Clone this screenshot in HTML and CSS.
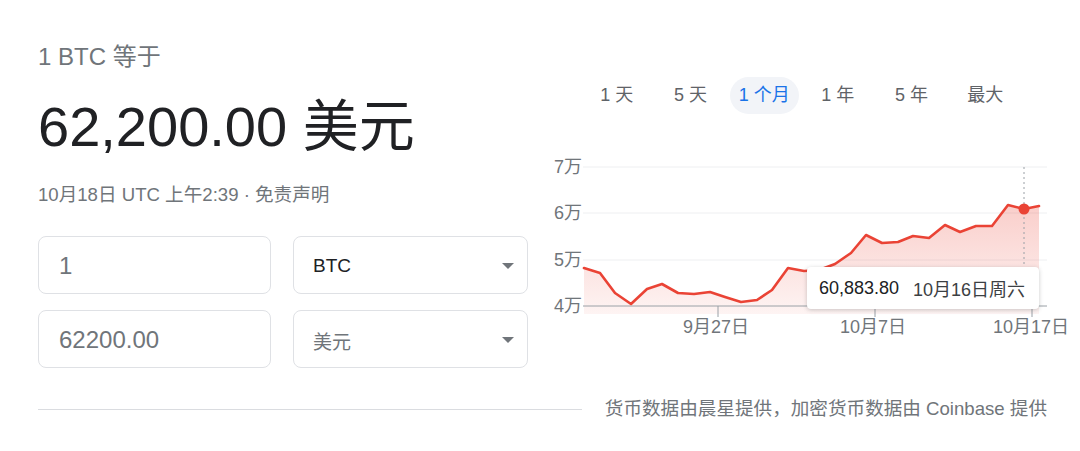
FILE: index.html
```html
<!DOCTYPE html>
<html lang="zh-CN">
<head>
<meta charset="utf-8">
<title>BTC 汇率</title>
<link rel="stylesheet" href="styles.css">
</head>
<body>
<div class="page">
  <div class="main">
    <section class="left">
      <div class="eq">1 BTC 等于</div>
      <div class="value">62,200.00 美元</div>
      <div class="date">10月18日 UTC 上午2:39 · 免责声明</div>
      <div class="form">
        <div class="field"><span class="num">1</span></div>
        <div class="field select"><span class="cur dark">BTC</span><span class="caret"></span></div>
        <div class="field"><span class="num">62200.00</span></div>
        <div class="field select"><span class="cur">美元</span><span class="caret"></span></div>
      </div>
    </section>
    <section class="right">
      <div class="tabs">
        <div class="tab"><span>1 天</span></div>
        <div class="tab"><span>5 天</span></div>
        <div class="tab active"><span>1 个月</span></div>
        <div class="tab"><span>1 年</span></div>
        <div class="tab"><span>5 年</span></div>
        <div class="tab"><span>最大</span></div>
      </div>
      <div class="chart">
        <svg class="plot" width="540" height="190" viewBox="0 0 540 190">
          <defs>
            <linearGradient id="fillGrad" x1="0" y1="0" x2="0" y2="1">
              <stop offset="0" stop-color="#ea4335" stop-opacity="0.26"/>
              <stop offset="1" stop-color="#ea4335" stop-opacity="0.06"/>
            </linearGradient>
          </defs>
          <g class="grid">
            <line x1="43" y1="17" x2="507" y2="17"/>
            <line x1="43" y1="63" x2="507" y2="63"/>
            <line x1="43" y1="110" x2="507" y2="110"/>
          </g>
          <polygon fill="url(#fillGrad)" points="44,118 60,123 75,143 91,154 107,139 122,134 138,143 154,144 170,142 185,147 201,152 217,150 232,140 248,118 264,121 279,120 295,114 311,103 326,85 342,93 358,92 373,86 389,88 405,75 420,82 436,76 452,76 468,55 484,59 499,56 499,164 44,164"/>
          <line class="base" x1="43" y1="156" x2="507" y2="156"/>
          <g class="ticks">
            <line x1="178" y1="156" x2="178" y2="167"/>
            <line x1="335" y1="156" x2="335" y2="167"/>
            <line x1="492" y1="156" x2="492" y2="167"/>
          </g>
          <line class="cursor" x1="484" y1="17" x2="484" y2="156"/>
          <polyline class="price" points="44,118 60,123 75,143 91,154 107,139 122,134 138,143 154,144 170,142 185,147 201,152 217,150 232,140 248,118 264,121 279,120 295,114 311,103 326,85 342,93 358,92 373,86 389,88 405,75 420,82 436,76 452,76 468,55 484,59 499,56"/>
          <circle cx="484" cy="59" r="5.5" fill="#ea4335"/>
          <g class="ylab">
            <text x="42" y="23">7万</text>
            <text x="42" y="69">6万</text>
            <text x="42" y="116">5万</text>
            <text x="42" y="162">4万</text>
          </g>
          <g class="xlab">
            <text x="176" y="183">9月27日</text>
            <text x="333" y="183">10月7日</text>
            <text x="491" y="183">10月17日</text>
          </g>
        </svg>
        <div class="tip"><span class="tip-val">60,883.80</span><span class="tip-date">10月16日周六</span></div>
      </div>
    </section>
  </div>
  <div class="foot">
    <div class="rule"></div>
    <div class="src">货币数据由晨星提供，加密货币数据由 Coinbase 提供</div>
  </div>
</div>
</body>
</html>
```
FILE: styles.css
```css
* { box-sizing: border-box; }
html, body { margin: 0; padding: 0; background: #fff; }
body {
  font-family: "Liberation Sans", Arial, "Noto Sans CJK SC", sans-serif;
  color: #202124;
}
.page {
  width: 1080px;
  height: 451px;
  padding: 0 33px 0 38px;
  overflow: hidden;
}
.main {
  display: grid;
  grid-template-columns: 490px 1fr;
  column-gap: 12px;
}
.left { padding-top: 41px; }
.eq {
  font-size: 24px;
  line-height: 32px;
  color: #70757a;
}
.value {
  margin-top: 22px;
  font-size: 56px;
  line-height: 64px;
  color: #202124;
}
.date {
  margin-top: 24px;
  font-size: 18.6px;
  line-height: 24px;
  color: #70757a;
}
.form {
  margin-top: 29px;
  display: grid;
  grid-template-columns: 233px 235px;
  grid-auto-rows: 58px;
  column-gap: 22px;
  row-gap: 16px;
}
.field {
  border: 1px solid #dfe1e5;
  border-radius: 8px;
  display: flex;
  align-items: center;
  padding: 2px 19px 0 20px;
}
.num { font-size: 24px; color: #70757a; }
.select { justify-content: space-between; padding: 2px 13px 0 19px; }
.cur { font-size: 19px; color: #70757a; }
.cur.dark { color: #202124; }
.caret {
  width: 0; height: 0;
  border-left: 6px solid transparent;
  border-right: 6px solid transparent;
  border-top: 6px solid #70757a;
}
.right { padding-top: 77px; }
.tabs {
  margin-left: 40px;
  width: 442px;
  display: grid;
  grid-template-columns: repeat(6, 1fr);
}
.tab {
  display: flex;
  justify-content: center;
  font-size: 18px;
  line-height: 37px;
  color: #5f6368;
}
.tab span { padding: 0 9px; border-radius: 19px; }
.tab.active span { background: #f2f4f8; color: #1a73e8; }
.chart {
  position: relative;
  margin-top: 36px;
  width: 540px;
  height: 190px;
}
.plot { display: block; overflow: visible; }
.grid line { stroke: #eeeff1; stroke-width: 1; }
.base { stroke: #9aa0a6; stroke-width: 1; }
.ticks line { stroke: #9aa0a6; stroke-width: 1; }
.cursor { stroke: #9aa0a6; stroke-width: 1; stroke-dasharray: 2 3; }
.price { fill: none; stroke: #ea4335; stroke-width: 2.6; stroke-linejoin: round; stroke-linecap: round; }
.ylab text {
  font-family: "Liberation Sans", Arial, "Noto Sans CJK SC", sans-serif;
  font-size: 18px; fill: #70757a; text-anchor: end;
}
.xlab text {
  font-family: "Liberation Sans", Arial, "Noto Sans CJK SC", sans-serif;
  font-size: 18px; fill: #70757a; text-anchor: middle;
}
.tip {
  position: absolute;
  left: 267px;
  top: 117px;
  width: 232px;
  height: 42px;
  background: #fff;
  border-radius: 4px;
  box-shadow: 0 1px 4px rgba(60, 64, 67, 0.28);
  display: flex;
  align-items: center;
  gap: 14px;
  padding-left: 12px;
  font-size: 18px;
  white-space: nowrap;
}
.tip-val { color: #202124; }
.tip-date { color: #3c4043; }
.foot {
  margin-top: 29px;
  display: flex;
  align-items: center;
}
.rule { flex: 1; height: 1px; background: #dadce0; }
.src {
  margin-left: 23px;
  font-size: 18.6px;
  line-height: 24px;
  color: #70757a;
}
```
